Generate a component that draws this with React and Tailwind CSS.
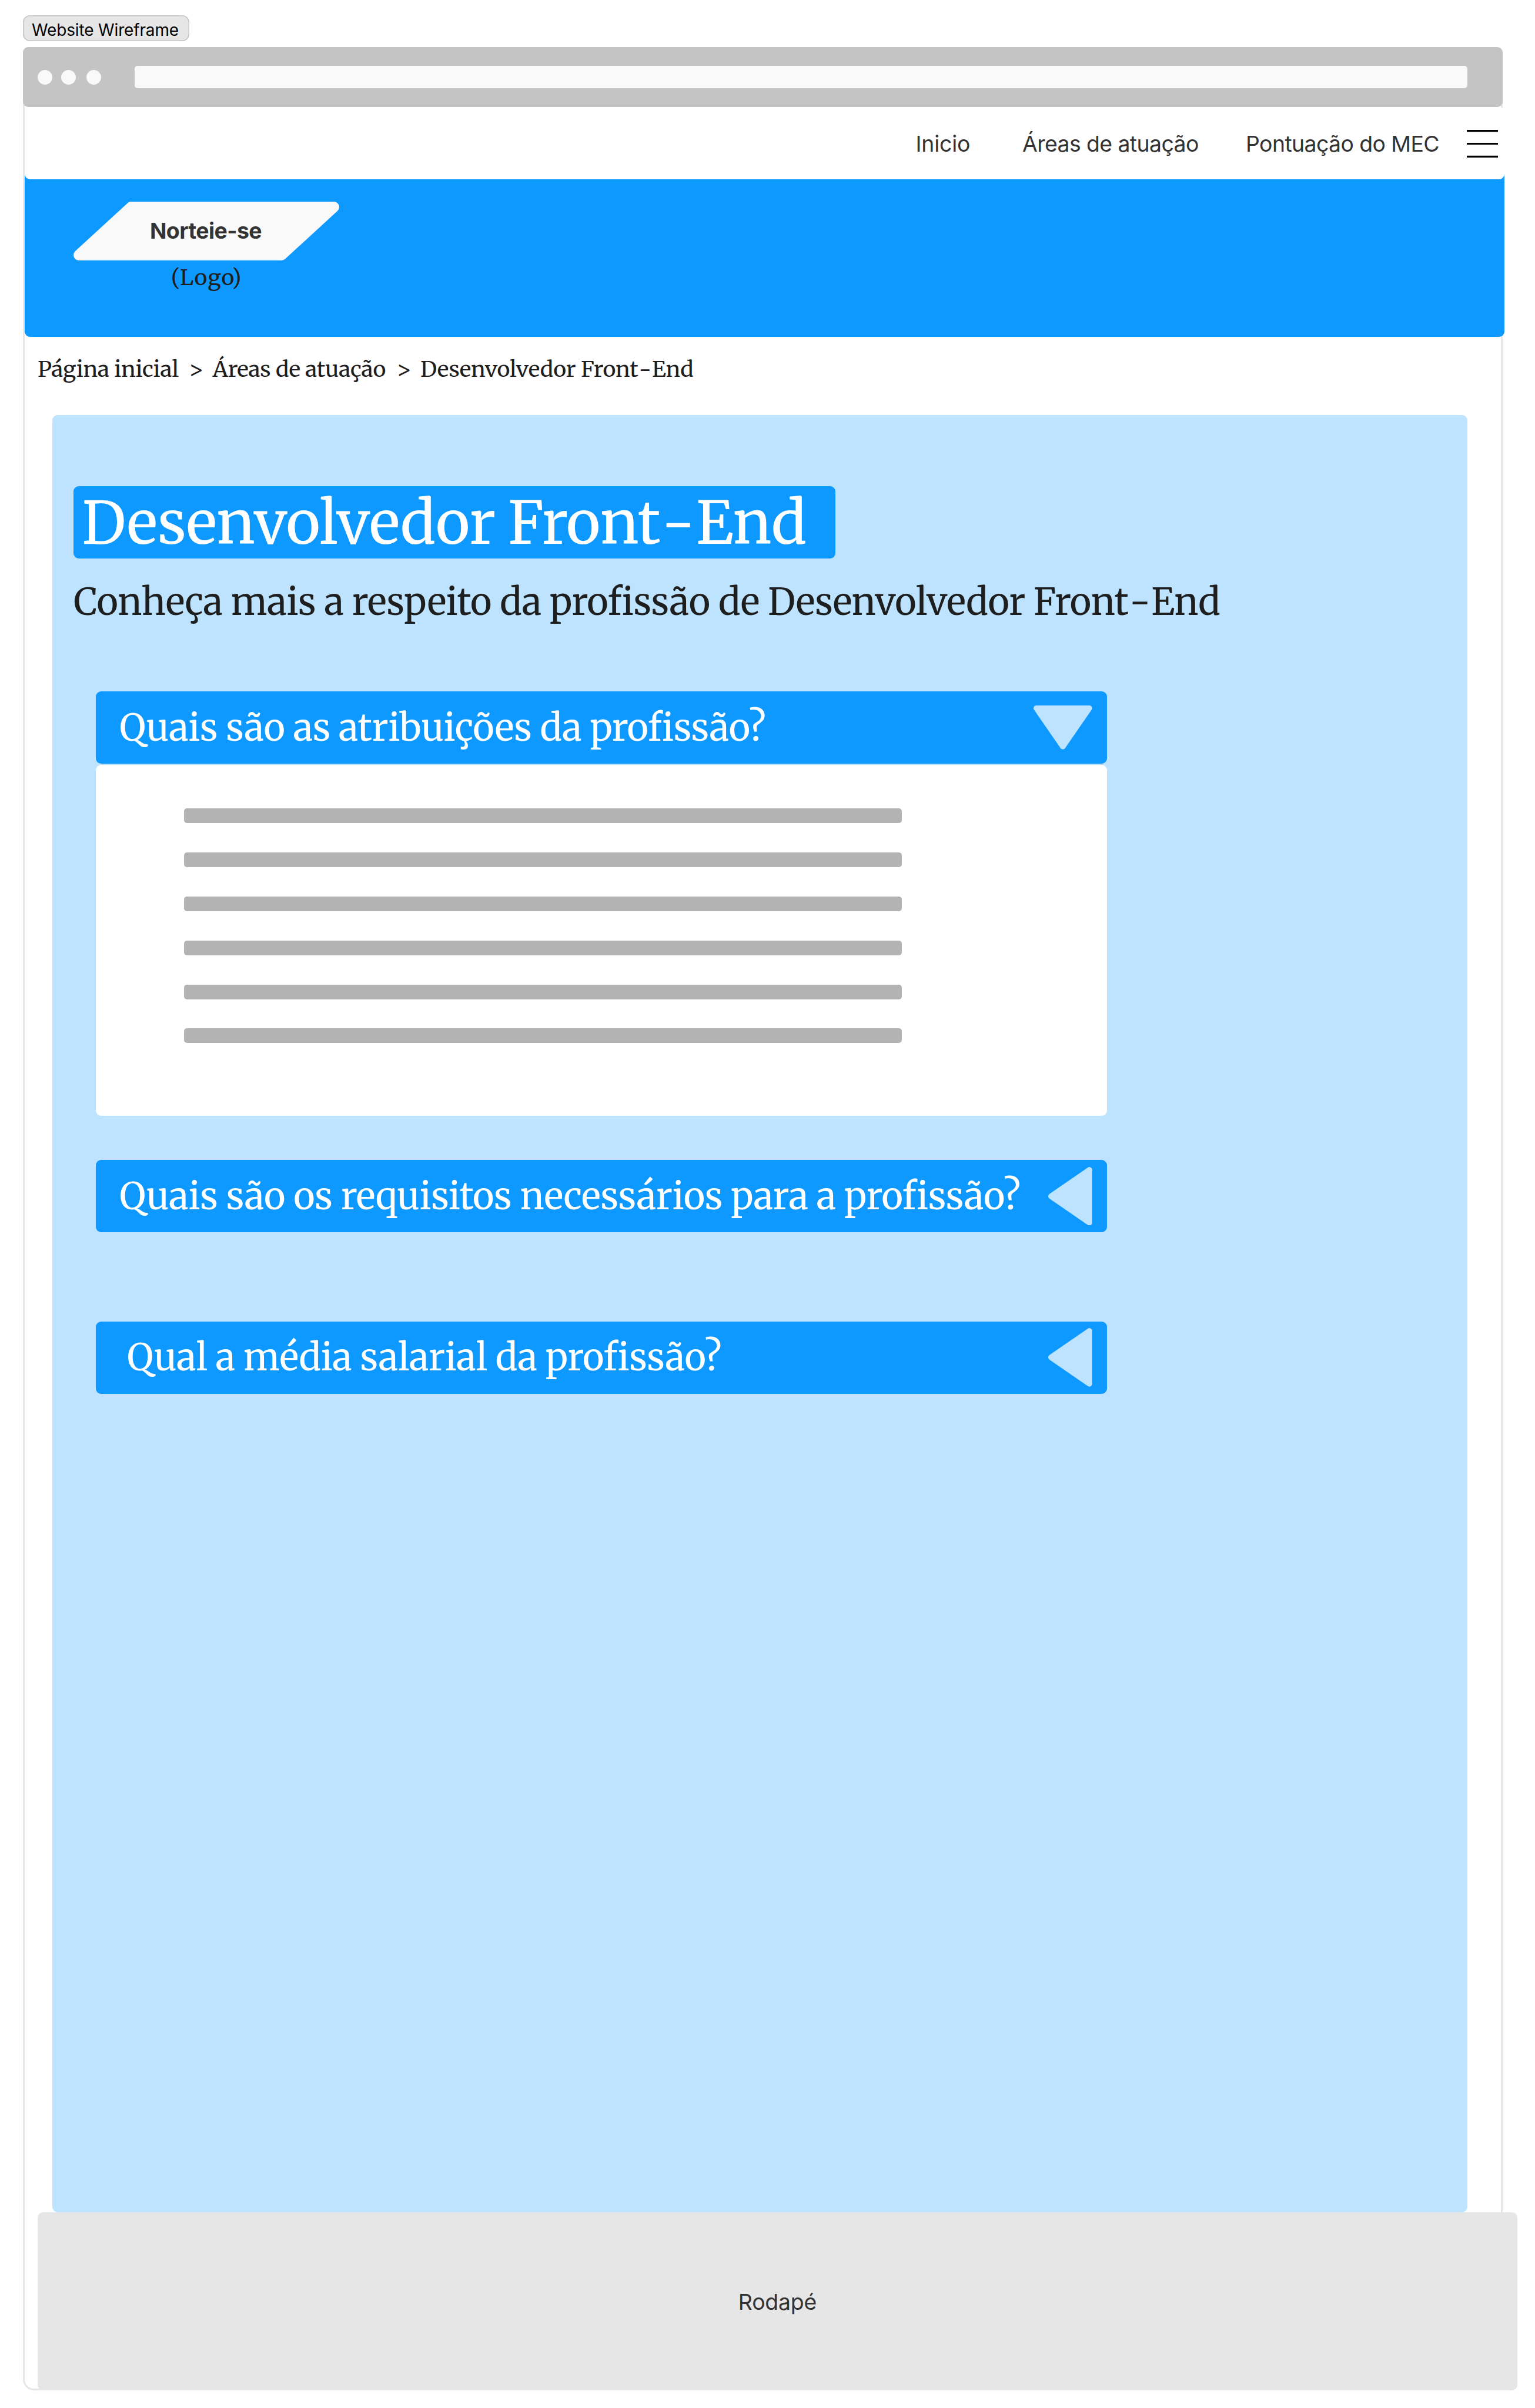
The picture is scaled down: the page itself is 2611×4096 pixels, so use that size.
const serif = "font-['Merriweather','DejaVu_Serif_Condensed',serif]";

function Arrow({ open }) {
  return open ? (
    <svg viewBox="0 0 128 96" className="h-[74.7px] w-[99.7px] shrink-0">
      <path d="M6 6H122L64 90Z" fill="#bde3ff" stroke="#bde3ff" strokeWidth="12" strokeLinejoin="round" />
    </svg>
  ) : (
    <svg viewBox="0 0 96 128" className="h-[99.7px] w-[74.7px] shrink-0">
      <path d="M90 6V122L6 64Z" fill="#bde3ff" stroke="#bde3ff" strokeWidth="12" strokeLinejoin="round" />
    </svg>
  );
}

// "Front-End" with a little air on both sides of the hyphen
function FrontEnd({ tight }) {
  return (
    <>
      Front<span className={tight ? "mx-[0.017em] inline-block" : "mx-[0.026em] inline-block"}>-</span>End
    </>
  );
}

function Question({ children, open, className }) {
  return (
    <button
      className={`flex h-[123px] w-full items-center justify-between rounded-[9px] bg-[#0d99ff] pr-[25px] text-left text-[62.3px] leading-[80px] whitespace-nowrap text-white ${className}`}
    >
      <span>{children}</span>
      <Arrow open={open} />
    </button>
  );
}

function TitleBar() {
  return (
    <div className="-mx-[3px] -mt-[3px] flex h-[102px] items-center rounded-[9px] bg-[#c4c4c4] pr-[60px] pl-[25px]">
      <span className="size-[25px] rounded-full bg-[#f9f9f9]" />
      <span className="ml-[15px] size-[25px] rounded-full bg-[#f9f9f9]" />
      <span className="ml-[17.5px] size-[25px] rounded-full bg-[#f9f9f9]" />
      <span className="ml-[57.5px] h-[38px] flex-1 rounded-[5px] bg-[#f9f9f9]" />
    </div>
  );
}

function Nav() {
  return (
    <nav className="relative z-10 -mr-[6px] flex h-[123px] items-center justify-end rounded-[9px] bg-white pt-[2px] pr-[11px] text-[37.4px] leading-[48px] tracking-[-0.6px] text-[#333]">
      <a className="w-[181.5px] tracking-[-0.2px]">Inicio</a>
      <a className="w-[380px]">Áreas de atuação</a>
      <a className="w-[376px]">Pontuação do MEC</a>
      <svg viewBox="0 0 53 47" className="h-[47px] w-[53px]">
        <path d="M0 1.6H53M0 23.5H53M0 45.4H53" stroke="#000" strokeWidth="3.1" />
      </svg>
    </nav>
  );
}

function Hero() {
  return (
    <header className="-mt-[12px] -mr-[6px] h-[280px] rounded-b-[9px] bg-[#0d99ff] pt-[50px] pl-[83px]">
      <div className="w-[452px] text-center">
        <div className="relative flex h-[100px] items-center justify-center pr-[2px]">
          <svg viewBox="0 0 451.5 99.7" className="absolute inset-0 h-full w-full">
            <path d="M98 9H442.5L353.5 90.7H9Z" fill="#f9f9f9" stroke="#f9f9f9" strokeWidth="18" strokeLinejoin="round" />
          </svg>
          <span className="relative text-[37.4px] leading-[48px] font-bold tracking-[-0.6px] text-[#333]">Norteie-se</span>
        </div>
        <div className={`mt-[7px] text-[37.4px] leading-[44px] tracking-[0.9px] text-[#1e1e1e] ${serif}`}>(Logo)</div>
      </div>
    </header>
  );
}

function Breadcrumb() {
  return (
    <div className={`flex h-[133px] pt-[25px] pl-[22px] text-[37.4px] leading-[60px] tracking-[-0.3px] whitespace-nowrap text-[#1e1e1e] ${serif}`}>
      <span className="w-[257px]">Página inicial</span>
      <span className="w-[40.5px]">&gt;</span>
      <span className="w-[313px]">Áreas de atuação</span>
      <span className="w-[40.5px]">&gt;</span>
      <span className="tracking-[-0.15px]">
        Desenvolvedor <FrontEnd />
      </span>
    </div>
  );
}

export default function App() {
  return (
    <div className="h-[4096px] w-[2611px] overflow-hidden bg-white pt-[26px] pl-[39px] font-['Inter',sans-serif]">
      <div className="h-[44px] w-[283px] rounded-[12px] bg-[#e6e6e6] pt-[3px] pl-[15px] text-[28px] leading-[44px] tracking-[-0.15px] whitespace-nowrap text-black shadow-[inset_0_0_0_1.5px_#c4c4c4]">
        Website Wireframe
      </div>
      <div className="mt-[10px] h-[3986px] w-[2517px] rounded-[19px] border-[3px] border-[#e6e6e6]">
        <TitleBar />
        <Nav />
        <Hero />
        <Breadcrumb />
        <main className={`ml-[47px] h-[3057px] w-[2407px] rounded-[9px] bg-[#bde3ff] pt-[121px] ${serif}`}>
          <h1 className="ml-[36px] flex h-[123px] w-[1296px] items-center rounded-[9px] bg-[#0d99ff] pt-[2px] pl-[14px] text-[99.7px] leading-[120px] tracking-[-0.5px] whitespace-nowrap text-white">
            <span className="[word-spacing:-2px]">
              Desenvolvedor <FrontEnd tight />
            </span>
          </h1>
          <h2 className="mt-[34px] ml-[36px] text-[62.3px] leading-[80px] tracking-[-0.46px] whitespace-nowrap text-[#1e1e1e]">
            Conheça mais a respeito da profissão de Desenvolvedor <FrontEnd />
          </h2>
          <div className="mt-[112px] ml-[74px] w-[1720px]">
            <Question open className="pl-[40px] tracking-[-0.5px]">
              Quais são as atribuições da profissão?
            </Question>
            <div className="mt-[2px] flex h-[597px] flex-col gap-[49.9px] rounded-[9px] bg-white pt-[74px] pl-[150px]">
              {[0, 1, 2, 3, 4, 5].map((i) => (
                <div key={i} className="h-[25px] w-[1221px] rounded-[5px] bg-[#b3b3b3]" />
              ))}
            </div>
            <Question className="mt-[75px] pl-[40px] tracking-[-0.44px]">
              Quais são os requisitos necessários para a profissão?
            </Question>
            <Question className="mt-[151.5px] pl-[53px] tracking-[-0.46px]">Qual a média salarial da profissão?</Question>
          </div>
        </main>
        <footer className="ml-[22px] flex h-[303px] w-[2517px] items-center justify-center rounded-[9px] bg-[#e6e6e6] pt-[3px] text-[37.4px] leading-[48px] tracking-[-0.2px] text-[#333]">
          Rodapé
        </footer>
      </div>
    </div>
  );
}
